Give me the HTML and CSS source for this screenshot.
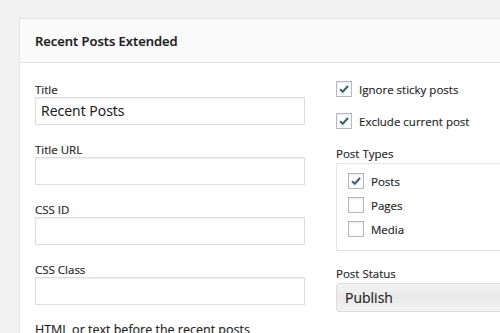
FILE: index.html
```html
<!DOCTYPE html>
<html>
<head>
<meta charset="utf-8">
<link rel="stylesheet" href="styles.css">
</head>
<body>
<div class="widget">
  <div class="widget-head">Recent Posts Extended</div>
  <div class="widget-body">
    <div class="col-left">
      <div class="field">
        <label class="lbl">Title</label>
        <div class="input">Recent Posts</div>
      </div>
      <div class="field">
        <label class="lbl">Title URL</label>
        <div class="input"></div>
      </div>
      <div class="field">
        <label class="lbl">CSS ID</label>
        <div class="input"></div>
      </div>
      <div class="field">
        <label class="lbl">CSS Class</label>
        <div class="input"></div>
      </div>
      <div class="field">
        <label class="lbl lbl-wide">HTML or text before the recent posts</label>
      </div>
    </div>
    <div class="col-right">
      <div class="check-row">
        <span class="cb checked"><svg viewBox="0 0 16 16"><path d="M3.5 8.2 L6.6 11.2 L12.6 4.6"/></svg></span>
        <span class="cb-text">Ignore sticky posts</span>
      </div>
      <div class="check-row">
        <span class="cb checked"><svg viewBox="0 0 16 16"><path d="M3.5 8.2 L6.6 11.2 L12.6 4.6"/></svg></span>
        <span class="cb-text">Exclude current post</span>
      </div>
      <label class="lbl types-lbl">Post Types</label>
      <div class="types-box">
        <div class="type-row">
          <span class="cb checked"><svg viewBox="0 0 16 16"><path d="M3.5 8.2 L6.6 11.2 L12.6 4.6"/></svg></span>
          <span class="cb-text">Posts</span>
        </div>
        <div class="type-row">
          <span class="cb"></span>
          <span class="cb-text">Pages</span>
        </div>
        <div class="type-row">
          <span class="cb"></span>
          <span class="cb-text">Media</span>
        </div>
      </div>
      <label class="lbl status-lbl">Post Status</label>
      <div class="select">Publish</div>
      <label class="lbl order-lbl">Order</label>
    </div>
  </div>
</div>
</body>
</html>
```
FILE: styles.css
```css
html, body {
  margin: 0;
  padding: 0;
  overflow: hidden;
}
body {
  background: #f1f1f1;
  font-family: "Open Sans", "Liberation Sans", sans-serif;
  color: #222;
  padding: 18px 0 0 19px;
  width: 500px;
  height: 333px;
  box-sizing: border-box;
}
.widget {
  width: 620px;
  background: #fff;
  border: 1px solid #e5e5e5;
}
.widget-head {
  height: 43px;
  line-height: 44px;
  background: #fafafa;
  border-bottom: 1px solid #e5e5e5;
  padding-left: 15px;
  font-size: 13px;
  font-weight: 600;
  color: #1a1a1a;
  -webkit-text-stroke: 0.2px #1a1a1a;
}
.widget-body {
  display: flex;
  padding: 19px 0 0 15px;
  gap: 31px;
}
.col-left {
  width: 270px;
  flex: none;
}
.col-right {
  flex: 1;
}
.lbl {
  display: block;
  font-size: 11.5px;
  line-height: 15px;
  color: #1e1e1e;
  -webkit-text-stroke: 0.15px #1e1e1e;
}
.lbl-wide {
  font-size: 12.5px;
}
.field {
  margin-bottom: 17px;
}
.input {
  height: 28px;
  box-sizing: border-box;
  border: 1px solid #ddd;
  box-shadow: inset 0 1px 2px rgba(0,0,0,0.07);
  background: #fff;
  font-size: 14px;
  line-height: 26px;
  padding-left: 5px;
  color: #1e1e1e;
  -webkit-text-stroke: 0.15px #1e1e1e;
}
.check-row {
  display: flex;
  align-items: center;
  height: 16px;
  margin-top: -1px;
  margin-bottom: 17px;
}
.cb {
  width: 16px;
  height: 16px;
  box-sizing: border-box;
  border: 1px solid #b4b9be;
  background: #fff;
  box-shadow: inset 0 1px 2px rgba(0,0,0,0.1);
  flex: none;
  display: flex;
  align-items: center;
  justify-content: center;
}
.cb svg {
  width: 14px;
  height: 14px;
}
.cb svg path {
  fill: none;
  stroke: #3a6275;
  stroke-width: 2.4;
}
.cb-text {
  font-size: 11.5px;
  margin-left: 7px;
  color: #1e1e1e;
  -webkit-text-stroke: 0.15px #1e1e1e;
}
.types-lbl {
  margin-top: 0;
  margin-bottom: 2px;
}
.types-box {
  border: 1px solid #e5e5e5;
  padding: 9px 0 0 11px;
  height: 88px;
  box-sizing: border-box;
}
.type-row {
  display: flex;
  align-items: center;
  height: 16px;
  margin-bottom: 8px;
}
.type-row:last-child { margin-bottom: 0; }
.status-lbl {
  margin-top: 15px;
}
.select {
  margin-top: 2px;
  height: 29px;
  box-sizing: border-box;
  border: 1px solid #ddd;
  border-radius: 3px 0 0 3px;
  background: linear-gradient(#f4f4f4, #e9e9e9 50%, #f3f3f3);
  font-size: 14px;
  line-height: 27px;
  padding-left: 8px;
  color: #1e1e1e;
  -webkit-text-stroke: 0.15px #1e1e1e;
}
.order-lbl {
  margin-top: 20px;
}
```
